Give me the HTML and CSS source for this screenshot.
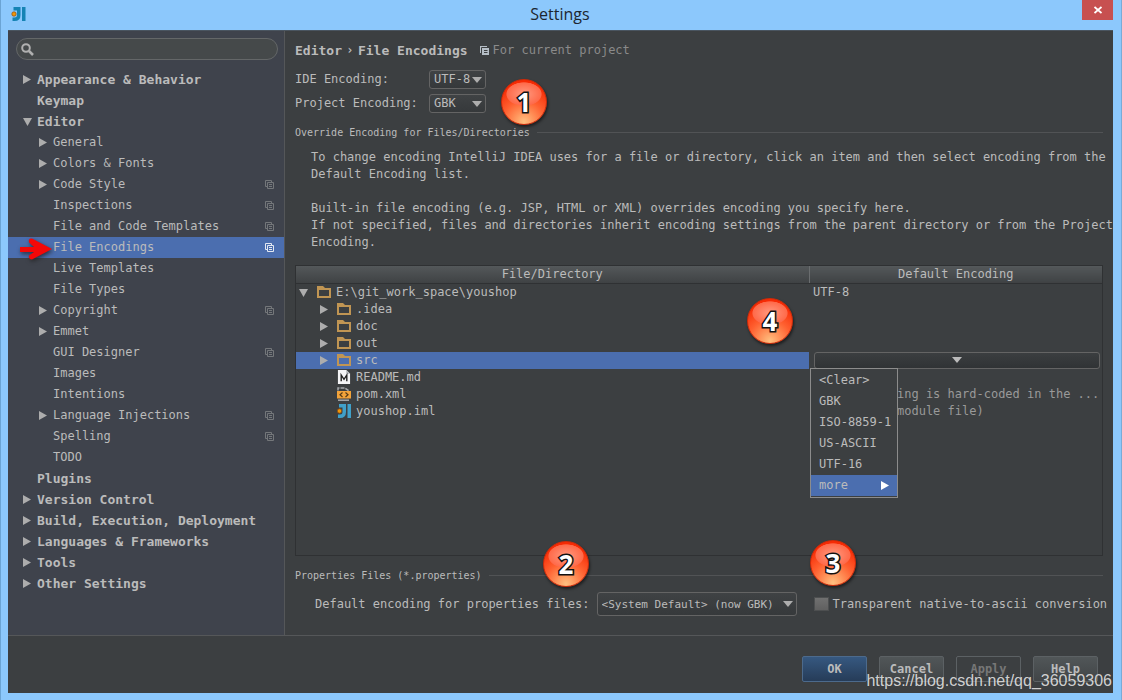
FILE: index.html
```html
<!DOCTYPE html>
<html lang="en">
<head>
<meta charset="utf-8">
<title>Settings</title>
<link rel="stylesheet" href="styles.css">
</head>
<body>
<svg class="defs" aria-hidden="true">
  <defs>
    <symbol id="right" viewBox="0 0 9 9"><path d="M0 0 8 4.5 0 9z" fill="currentColor"/></symbol>
    <symbol id="down" viewBox="0 0 9 9"><path d="M0 1H9L4.500 9z" fill="currentColor"/></symbol>
    <symbol id="combo" viewBox="0 0 10 6"><path d="M0 0H10L5 6z" fill="currentColor"/></symbol>
    <symbol id="copy" viewBox="0 0 9 9"><path d="M2.500 6.500H.5V.5H6.500V2.500M2.500 2.500H8.500V8.500H2.500zM4 4.500H7M4 6.500H7" fill="none" stroke="currentColor"/></symbol>
    <symbol id="copy-bold" viewBox="0 0 9 9"><path d="M0 0H7V2H2V7H0zM2 2H9V9H2z" fill="currentColor"/><path d="M1.500 7V1.500H7M4 4.500H7.500M4 6.500H7.500" fill="none" stroke="#3c3f41"/></symbol>
    <symbol id="folder" viewBox="0 0 14 12"><path d="M0 0H6L8 2H14V12H0zM2 4V10H12V4z" fill="#c09553" fill-rule="evenodd"/></symbol>
    <symbol id="idea" viewBox="0 0 14 14"><path d="M2 0H9V8Q9 14 3 14H1V10.500H3Q5.500 10.500 5.500 8V3.500H2zM10.500 0H14V14H10.500z" fill="currentColor"/><circle cx="2.500" cy="7" r="2.200" fill="#f09609" stroke="#8c4a10" stroke-width=".7"/></symbol>
    <symbol id="md" viewBox="0 0 13 15"><path d="M0 0H9L13 4V15H0z" fill="#f4f4f6"/><path d="M9 0V4H13z" fill="#aeb2b7"/><path d="M3.500 12V5.500L6.500 10 9.500 5.500V12" fill="none" stroke="#222" stroke-width="1.500"/></symbol>
    <symbol id="xml" viewBox="0 0 14 14"><path d="M1 3.500V1H8L12 4" fill="none" stroke="#a5a8aa" stroke-width="1.500" stroke-dasharray="4 1"/><path d="M0 4H14V11.500H0z" fill="#f2a33a"/><path d="M5.500 5.500 3 7.700 5.500 10M8.500 5.500 11 7.700 8.500 10" fill="none" stroke="#553b18" stroke-width="1.200"/><path d="M1 13.200H12" stroke="#a5a8aa" stroke-width="1.500"/></symbol>
  </defs>
</svg>

<div class="window">
  <header class="titlebar">
    <svg class="app-icon"><use href="#idea"/></svg>
    <h1>Settings</h1>
    <button class="close" aria-label="Close"><svg viewBox="0 0 8 8"><path d="M.5 1 7.500 7M7.500 1 .5 7" stroke="#fff" stroke-width="1.800"/></svg></button>
  </header>

  <div class="frame">
    <div class="panes">
      <nav class="sidebar">
        <label class="search">
          <svg viewBox="0 0 13 13"><circle cx="5" cy="5" r="3.800" fill="none" stroke="#b0b0b0" stroke-width="2"/><path d="M8 8 12 12" stroke="#b0b0b0" stroke-width="2.500"/></svg>
          <input type="text" aria-label="Search settings">
        </label>
        <ul class="tree">
          <li class="top"><svg class="twisty"><use href="#right"/></svg><span>Appearance &amp; Behavior</span></li>
          <li class="top"><i class="twisty"></i><span>Keymap</span></li>
          <li class="top"><svg class="twisty"><use href="#down"/></svg><span>Editor</span></li>
          <li><svg class="twisty"><use href="#right"/></svg><span>General</span></li>
          <li><svg class="twisty"><use href="#right"/></svg><span>Colors &amp; Fonts</span></li>
          <li><svg class="twisty"><use href="#right"/></svg><span>Code Style</span><svg class="scope"><use href="#copy"/></svg></li>
          <li><i class="twisty"></i><span>Inspections</span><svg class="scope"><use href="#copy"/></svg></li>
          <li><i class="twisty"></i><span>File and Code Templates</span><svg class="scope"><use href="#copy"/></svg></li>
          <li class="selected"><i class="twisty"></i><span>File Encodings</span><svg class="scope"><use href="#copy"/></svg>
            <svg class="pointer" viewBox="0 0 34 26"><path d="M1 10H15L10 5.500Q9 1 13 1.500L33 12 13 22.500Q9 22 10 18.500L15 15H1z" fill="#f40808"/></svg></li>
          <li><i class="twisty"></i><span>Live Templates</span></li>
          <li><i class="twisty"></i><span>File Types</span></li>
          <li><svg class="twisty"><use href="#right"/></svg><span>Copyright</span><svg class="scope"><use href="#copy"/></svg></li>
          <li><svg class="twisty"><use href="#right"/></svg><span>Emmet</span></li>
          <li><i class="twisty"></i><span>GUI Designer</span><svg class="scope"><use href="#copy"/></svg></li>
          <li><i class="twisty"></i><span>Images</span></li>
          <li><i class="twisty"></i><span>Intentions</span></li>
          <li><svg class="twisty"><use href="#right"/></svg><span>Language Injections</span><svg class="scope"><use href="#copy"/></svg></li>
          <li><i class="twisty"></i><span>Spelling</span><svg class="scope"><use href="#copy"/></svg></li>
          <li><i class="twisty"></i><span>TODO</span></li>
          <li class="top"><i class="twisty"></i><span>Plugins</span></li>
          <li class="top"><svg class="twisty"><use href="#right"/></svg><span>Version Control</span></li>
          <li class="top"><svg class="twisty"><use href="#right"/></svg><span>Build, Execution, Deployment</span></li>
          <li class="top"><svg class="twisty"><use href="#right"/></svg><span>Languages &amp; Frameworks</span></li>
          <li class="top"><svg class="twisty"><use href="#right"/></svg><span>Tools</span></li>
          <li class="top"><svg class="twisty"><use href="#right"/></svg><span>Other Settings</span></li>
        </ul>
      </nav>

      <main class="content">
        <div class="crumbs">
          <strong>Editor</strong><b class="sep">›</b><strong>File Encodings</strong>
          <svg class="scope"><use href="#copy-bold"/></svg><span>For current project</span>
        </div>

        <div class="fields">
          <label for="ide">IDE Encoding:</label>
          <span class="combo"><select id="ide"><option>UTF-8</option><option>GBK</option></select><svg><use href="#combo"/></svg></span>
          <label for="project">Project Encoding:</label>
          <span class="combo"><select id="project"><option>GBK</option><option>UTF-8</option></select><svg><use href="#combo"/></svg></span>
        </div>

        <h2 class="group">Override Encoding for Files/Directories</h2>
        <div class="help">
          <p>To change encoding IntelliJ IDEA uses for a file or directory, click an item and then select encoding from the<br>Default Encoding list.</p>
          <p>Built-in file encoding (e.g. JSP, HTML or XML) overrides encoding you specify here.<br>If not specified, files and directories inherit encoding settings from the parent directory or from the Project<br>Encoding.</p>
        </div>

        <div class="table-box">
          <table>
            <colgroup><col><col class="enc"></colgroup>
            <thead><tr><th>File/Directory</th><th>Default Encoding</th></tr></thead>
            <tbody>
              <tr><td><div class="node root"><svg class="twisty"><use href="#down"/></svg><svg class="file"><use href="#folder"/></svg>E:\git_work_space\youshop</div></td><td>UTF-8</td></tr>
              <tr><td><div class="node"><svg class="twisty"><use href="#right"/></svg><svg class="file"><use href="#folder"/></svg>.idea</div></td><td></td></tr>
              <tr><td><div class="node"><svg class="twisty"><use href="#right"/></svg><svg class="file"><use href="#folder"/></svg>doc</div></td><td></td></tr>
              <tr><td><div class="node"><svg class="twisty"><use href="#right"/></svg><svg class="file"><use href="#folder"/></svg>out</div></td><td></td></tr>
              <tr><td class="selected"><div class="node"><svg class="twisty"><use href="#right"/></svg><svg class="file"><use href="#folder"/></svg>src</div></td>
                <td><div class="editor">
                  <button class="cell-combo" aria-label="Encoding for src" aria-haspopup="menu"><svg><use href="#combo"/></svg></button>
                  <div class="menu" role="menu">
                    <button role="menuitem">&lt;Clear&gt;</button>
                    <button role="menuitem">GBK</button>
                    <button role="menuitem">ISO-8859-1</button>
                    <button role="menuitem">US-ASCII</button>
                    <button role="menuitem">UTF-16</button>
                    <button role="menuitem" class="active">more<svg><use href="#right"/></svg></button>
                  </div>
                </div></td></tr>
              <tr><td><div class="node"><i class="twisty"></i><svg class="file"><use href="#md"/></svg>README.md</div></td><td></td></tr>
              <tr><td><div class="node"><i class="twisty"></i><svg class="file"><use href="#xml"/></svg>pom.xml</div></td><td class="note">ing is hard-coded in the ...</td></tr>
              <tr><td><div class="node"><i class="twisty"></i><svg class="file idea"><use href="#idea"/></svg>youshop.iml</div></td><td class="note">module file)</td></tr>
            </tbody>
          </table>
        </div>

        <h2 class="group">Properties Files (*.properties)</h2>
        <div class="properties">
          <label for="props">Default encoding for properties files:</label>
          <span class="combo wide"><select id="props"><option>&lt;System Default&gt; (now GBK)</option></select><svg><use href="#combo"/></svg></span>
          <label class="check"><input type="checkbox">Transparent native-to-ascii conversion</label>
        </div>
      </main>
    </div>

    <footer class="actions">
      <button class="primary">OK</button>
      <button>Cancel</button>
      <button disabled>Apply</button>
      <button>Help</button>
    </footer>
  </div>

  <span class="badge one">1</span>
  <span class="badge two">2</span>
  <span class="badge three">3</span>
  <span class="badge four">4</span>
  <span class="watermark">https://blog.csdn.net/qq_36059306</span>
</div>
</body>
</html>
```
FILE: styles.css
```css
* { box-sizing: border-box; }
body {
  margin: 0;
  color: #bbb;
  font: 12px/17px "DejaVu Sans Mono", "Liberation Mono", monospace;
}
h1, h2, p, ul { margin: 0; padding: 0; font-weight: normal; }
button, input, select { margin: 0; color: inherit; font: inherit; }
svg { display: block; flex: none; }
.defs { position: absolute; width: 0; height: 0; }

.window {
  position: relative;
  display: flex;
  flex-direction: column;
  min-height: 100vh;
  padding: 0 8px 7px 7px;
  border-left: 1px solid #6ba4d4;
  border-right: 1px solid #78acd8;
  background: #8cc8fc;
}
.titlebar { display: flex; height: 30px; padding-left: 3px; }
.app-icon { width: 15px; height: 14px; margin-top: 7px; color: #1583b4; }
.titlebar h1 {
  flex: 1;
  padding-left: 12px;
  color: #1c2630;
  font: 16px/29px "Open Sans", "Noto Sans", sans-serif;
  text-align: center;
}
.close {
  display: grid;
  place-items: center;
  width: 31px;
  height: 20px;
  padding: 0;
  border: 0;
  background: #c75050;
}
.close svg { width: 8px; height: 8px; }

.frame { flex: 1; display: flex; flex-direction: column; background: #3c3f41; }
.panes { flex: 1; display: flex; border-bottom: 1px solid #555759; border-top: 1px solid #4a5560; }

.sidebar { width: 277px; padding-top: 7px; border-right: 1px solid #555759; background: #3f434c; }
.search {
  display: flex;
  align-items: center;
  height: 22px;
  margin: 0 6px 9px 8px;
  padding: 0 4px;
  border: 1px solid #646768;
  border-radius: 11px;
  background: #45494a;
}
.search svg { width: 13px; height: 13px; }
.search input { flex: 1; min-width: 0; padding: 0 6px; border: 0; outline: 0; background: none; }
.tree { list-style: none; }
.tree li {
  position: relative;
  display: flex;
  align-items: center;
  height: 21px;
  padding: 0 10px 0 31px;
}
.tree li.top { padding-left: 15px; font-size: 13px; font-weight: bold; }
.tree span { flex: 1; white-space: nowrap; }
.twisty { flex: none; width: 9px; height: 9px; margin-right: 5px; color: #adadad; }
.scope { width: 9px; height: 9px; color: #74777a; }
.selected { background: #4b6eaf; }
.selected .scope { color: #e3e8f2; }
.pointer {
  position: absolute;
  left: 11px;
  top: 0;
  width: 34px;
  height: 26px;
  filter: drop-shadow(1px 2px 2px #222c);
}

.content { flex: 1; display: flex; flex-direction: column; min-width: 0; padding: 8px 10px 19px 10px; }
.crumbs { display: flex; align-items: center; height: 22px; color: #8a8a8a; white-space: nowrap; }
.crumbs strong { color: #bbb; font-size: 13px; }
.crumbs .sep { width: 16px; color: #bbb; text-align: center; }
.crumbs .scope { margin: 0 4px 0 12px; color: #b5bec6; }

.fields {
  display: grid;
  grid-template-columns: 134px max-content;
  grid-auto-rows: 19px;
  gap: 5px 0;
  align-items: center;
  margin-top: 9px;
}
.combo { position: relative; display: flex; flex: none; width: 57px; height: 19px; }
.combo.wide { width: 200px; height: 24px; font-size: 11px; }
.combo select {
  width: 100%;
  padding: 0 0 0 4px;
  border: 1px solid #646464;
  border-radius: 3px;
  background: linear-gradient(#3f4244, #36393b);
  appearance: none;
}
.combo svg {
  position: absolute;
  right: 4px;
  top: calc(50% - 3px);
  width: 10px;
  height: 6px;
  color: #adadad;
  pointer-events: none;
}

.group { display: flex; align-items: center; gap: 7px; height: 17px; margin-top: 11px; font-size: 10px; }
.group::after { content: ""; flex: 1; height: 1px; background: #515355; }

.help { padding: 8px 0 0 16px; white-space: nowrap; }
.help p + p { margin-top: 17px; }

.table-box { flex: 1; margin-top: 14px; border: 1px solid #2f3133; }
table { width: 100%; border-collapse: collapse; table-layout: fixed; }
.enc { width: 293px; }
th {
  height: 17px;
  padding: 0;
  border-bottom: 1px solid #2f3133;
  background: linear-gradient(#54585a, #3f4244);
  font-weight: normal;
  line-height: 16px;
}
th + th { border-left: 1px solid #6a6d6f; }
td { height: 17px; padding: 0; white-space: nowrap; }
td + td { padding-left: 4px; }
td.note { padding-left: 88px; color: #999; }
.node { display: flex; align-items: center; padding-left: 24px; }
.node.root { padding-left: 3px; }
.node .twisty { margin-right: 8px; }
.node.root .twisty { margin-right: 9px; }
.file { width: 14px; height: 14px; margin-right: 5px; }
.idea { color: #40a0c8; }

.editor { position: relative; }
.cell-combo {
  display: grid;
  place-items: center;
  width: calc(100% - 3px);
  height: 17px;
  margin-left: 1px;
  padding: 0;
  border: 1px solid #646464;
  border-radius: 3px;
  background: linear-gradient(#3b3e40, #303335);
}
.cell-combo svg { width: 10px; height: 6px; }
.menu {
  position: absolute;
  z-index: 1;
  left: -3px;
  top: 16px;
  width: 88px;
  padding: 1px 0;
  border: 1px solid #8c8c8c;
  background: #3c3f41;
}
.menu button {
  display: flex;
  align-items: center;
  justify-content: space-between;
  width: 100%;
  height: 21px;
  padding: 0 7px 0 8px;
  border: 0;
  background: none;
}
.menu .active { background: #4b6eaf; }
.menu svg { width: 9px; height: 9px; color: #fff; }

.properties { display: flex; align-items: center; margin-top: 8px; padding-left: 20px; white-space: nowrap; }
.properties .combo { margin-left: 7px; }
.check { display: flex; align-items: center; gap: 4px; margin-left: 17px; }
.check input {
  flex: none;
  width: 15px;
  height: 14px;
  margin: 0;
  border: 1px solid #4d4f50;
  background: linear-gradient(#707070, #606060);
  appearance: none;
}

.actions { display: flex; justify-content: flex-end; gap: 12px; padding: 20px 15px 11px; }
.actions button {
  width: 65px;
  height: 26px;
  padding: 0;
  border: 1px solid #5c6164;
  border-radius: 2px;
  background: linear-gradient(#515658, #414547);
  font-weight: bold;
}
.actions .primary { border-color: #4c6a8c; background: linear-gradient(#365880, #263c58); }
.actions button:disabled { background: none; color: #777; }

.badge {
  position: absolute;
  display: grid;
  place-items: center;
  width: 46px;
  height: 46px;
  border: 1px solid #d02a08;
  border-radius: 50%;
  background:
    radial-gradient(ellipse 18px 12px at 50% 32%, #ff9a80 0, #ff6a4a 95%, transparent 100%),
    radial-gradient(circle at 50% 95%, #ffc080 0, #ff6030 45%, #f62a04 80%);
  box-shadow: 1px 2px 3px #0008;
  color: #fff;
  font: bold 26px/44px "Open Sans", "Noto Sans", sans-serif;
  paint-order: stroke fill;
  -webkit-text-stroke: 3px #111;
}
.one { left: 500px; top: 79px; }
.two { left: 542px; top: 541px; }
.three { left: 809px; top: 540px; }
.four { left: 746px; top: 298px; }
.watermark {
  position: absolute;
  right: 9px;
  bottom: 8px;
  color: #ddde;
  font: 16px/22px "Liberation Sans", Arial, sans-serif;
}
```
